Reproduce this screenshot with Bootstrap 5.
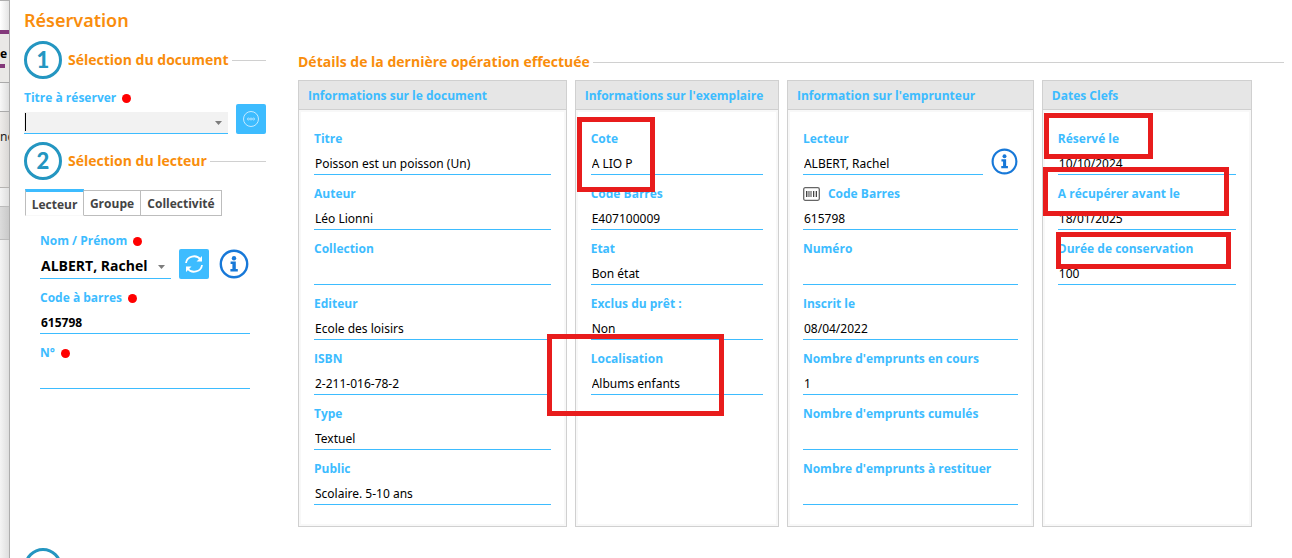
<!DOCTYPE html>
<html lang="fr">
<head>
<meta charset="utf-8">
<meta name="viewport" content="width=device-width, initial-scale=1">
<title>Réservation</title>
<link href="https://cdn.jsdelivr.net/npm/bootstrap@5.3.0/dist/css/bootstrap.min.css" rel="stylesheet">
<style>
  :root { --sky: #3dbcff; --amber: #f98d0c; --teal: #2496c1; }
  body { font-family: "Noto Sans", "Open Sans", sans-serif; font-size: 12px; color: #000; background: #fff; }
  .app { overflow: hidden; }
  .page { min-width: 0; padding: 8px 8px 0 14px; }

  /* window behind the dialog */
  .behind { width: 10px; border-right: 1px solid #adadad; overflow: hidden; font-size: 12px;
            background: linear-gradient(to right, #f4f4f4, #dedede); }
  .behind > div { flex: none; white-space: nowrap; }
  .strip-top { height: 30px; border-top: 1px solid #b0b0b0; background: linear-gradient(to right, #fff, #e4e4e4); }
  .strip-tab { height: 53px; border-top: 4px solid #83397b; border-bottom: 1px solid #aaa; background: #e9e8e6; line-height: 14px; padding-top: 13px; font-weight: 700; }
  .strip-mark { width: 5px; height: 4px; margin-top: 3px; background: #83397b; }
  .strip-band { height: 29px; border-bottom: 1px solid #aaa; background: linear-gradient(to right, #f8f8f8, #dedede); }
  .strip-text { height: 76px; border-bottom: 1px solid #b5b3b1; background: linear-gradient(to right, #eeecea, #d9d7d5); padding-top: 16px; color: #222; }
  .strip-gap { height: 18px; }
  .strip-bar { height: 34px; border: solid #bbb; border-width: 1px 0; background: linear-gradient(to right, #dcdcdc, #c9c9c9); }

  .page-title { font-size: 18px; line-height: 24px; font-weight: 600; color: var(--amber); }
  .legend-text { font-family: "Open Sans", sans-serif; font-size: 14px; line-height: 20px; font-weight: 700; color: var(--amber); white-space: nowrap; }
  .rule { height: 1px; margin-left: 3px; background: #d0d0d0; }
  .side { width: 242px; flex: none; padding-top: 9px; }
  .step { width: 38px; height: 38px; flex: none; border: 3px solid var(--teal); border-radius: 50%;
          color: var(--teal); font: 900 22px/32px "Lato", sans-serif; text-align: center; }
  .step + .legend-text { margin-left: 6px; }
  .title-row { margin-top: 5px; }
  .next-step { margin-top: 159px; }

  .field { position: relative; margin-bottom: 8px; }
  .field-name { display: flex; align-items: center; height: 20px; padding-top: 2px; font-family: "Open Sans", sans-serif; font-size: 12px; font-weight: 700; color: var(--sky); white-space: nowrap; }
  .line-input { display: block; width: 100%; height: 27px; padding: 4px 1px 0; border: 0; border-bottom: 1px solid var(--sky);
                border-radius: 0; background: none; color: #000; font-size: 12px; line-height: 22px; outline: 0; appearance: none; }
  .dot { width: 9px; height: 9px; margin-left: 6px; border-radius: 50%; background: #f00; }
  .combo { position: relative; }
  .combo svg { position: absolute; right: 6px; top: 50%; pointer-events: none; }
  .combo .combo-grey { height: 22px; background: #f2f2f2; }
  .combo-grey ~ svg { top: 9px; }
  .caret { position: absolute; left: 1px; top: 1px; width: 1px; height: 18px; background: #000; }
  .strong-value { font-weight: 700; }
  .name-value { font-family: "Open Sans", sans-serif; font-size: 14px; font-weight: 700; height: 29px; }
  .tool { width: 30px; height: 30px; flex: none; border-radius: 2px; background: var(--sky); }
  .info { flex: none; color: #1778d8; line-height: 0; }

  .tabs { margin: 9px 0 0 1px; }
  .tab { height: 26px; padding: 2px 0 0; border: 1px solid #bdbdbd; background: #fff; color: #444; font-family: "Open Sans", sans-serif; font-size: 12px; font-weight: 700; line-height: 20px; }
  .tab-active { width: 59px; height: 27px; border-top: 3px solid var(--sky); border-bottom-color: #f8f8f8; }
  .tab-mid { width: 57px; border-left: 0; }
  .tab-last { width: 81px; border-left: 0; }
  .tab-body { padding: 14px 16px 0; }
  .name-row { width: 209px; }
  .name-row .info { margin-left: 10px; }

  .details { min-width: 0; margin: 20px 0 0 32px; }
  .panels { margin: 8px 32px 0 0; }
  .panel { min-width: 0; border: 1px solid #d0d0d0; }
  .panel-head { height: 29px; padding-left: 9px; border-bottom: 1px solid #d0d0d0; background: #e6e6e6; color: var(--sky);
                font-family: "Open Sans", sans-serif; font-size: 12px; line-height: 29px; font-weight: 700; white-space: nowrap; }
  .panel-body { height: 416px; padding: 16px 13px 0; border: 2px solid #f8f8f8; }
  .panel-doc { flex: 269 1 0; }
  .panel-copy { flex: 204 1 0; }
  .panel-user { flex: 247 1 0; }
  .panel-dates { flex: 210 1 0; }

  /* red frames laid over the fields they point out */
  .frame { position: absolute; z-index: 2; border: 5px solid #e81c1c; pointer-events: none; }
  .frame-cote { left: -14px; top: -11px; width: 78px; height: 75px; }
  .frame-place { left: -44px; top: -14px; width: 177px; height: 82px; }
  .frame-booked { left: -14px; top: -15px; width: 109px; height: 46px; }
  .frame-pickup { left: -15px; top: -16px; width: 186px; height: 49px; }
  .frame-keep { left: -2px; top: -6px; width: 175px; height: 37px; }
</style>
</head>
<body>
<svg class="d-none" xmlns="http://www.w3.org/2000/svg">
  <symbol id="i-info" viewBox="0 0 30 30">
    <circle cx="15" cy="15" r="13.2" fill="none" stroke="currentColor" stroke-width="2.4"/>
    <circle cx="15" cy="9.2" r="2.2" fill="currentColor"/>
    <path d="M11.6 12.6h5.2v7.4h2v2.4h-7.4V20h2v-5h-1.8z" fill="currentColor"/>
  </symbol>
  <symbol id="i-arrow" viewBox="0 0 7 4"><path d="M0 0h7L3.500 4z" fill="#7d7d7d"/></symbol>
</svg>

<div class="app d-flex vh-100">
  <div class="behind d-flex flex-column flex-shrink-0" aria-hidden="true">
    <div class="strip-top"></div>
    <div class="strip-tab">e<div class="strip-mark"></div></div>
    <div class="strip-band"></div>
    <div class="strip-text">nc</div>
    <div class="strip-gap"></div>
    <div class="strip-bar"></div>
  </div>

  <main class="page flex-grow-1">
    <h1 class="page-title mb-0">Réservation</h1>
    <div class="d-flex align-items-start">
      <section class="side">
        <div class="d-flex align-items-center">
          <span class="step">1</span>
          <h2 class="legend-text mb-0">Sélection du document</h2>
          <div class="rule flex-grow-1"></div>
        </div>
        <div class="d-flex align-items-end mt-2">
          <div class="flex-grow-1 me-2">
            <label class="field-name" for="titre">Titre à réserver <span class="dot"></span></label>
            <div class="combo title-row">
              <select id="titre" class="line-input combo-grey"><option></option></select>
              <span class="caret"></span>
              <svg width="7" height="4"><use href="#i-arrow"/></svg>
            </div>
          </div>
          <button class="tool btn p-0 border-0 d-flex align-items-center justify-content-center" type="button" aria-label="Parcourir">
            <svg width="18" height="18" viewBox="0 0 18 18" fill="none" stroke="#c4eaff"><circle cx="9" cy="9" r="7.500"/><g stroke-width=".8"><circle cx="6.400" cy="9" r="1"/><circle cx="9" cy="9" r="1"/><circle cx="11.600" cy="9" r="1"/></g></svg>
          </button>
        </div>
        <div class="d-flex align-items-center mt-2">
          <span class="step">2</span>
          <h2 class="legend-text mb-0">Sélection du lecteur</h2>
          <div class="rule flex-grow-1"></div>
        </div>
        <div class="tabs d-flex align-items-end" role="tablist">
          <button class="tab tab-active" type="button" role="tab" aria-selected="true">Lecteur</button>
          <button class="tab tab-mid" type="button" role="tab">Groupe</button>
          <button class="tab tab-last" type="button" role="tab">Collectivité</button>
        </div>
        <div class="tab-body">
          <div class="d-flex align-items-end field name-row">
            <div class="flex-grow-1">
              <label class="field-name" for="nom">Nom / Prénom <span class="dot"></span></label>
              <div class="combo">
                <select id="nom" class="line-input name-value"><option>ALBERT, Rachel</option></select>
                <svg width="7" height="4"><use href="#i-arrow"/></svg>
              </div>
            </div>
            <button class="tool btn p-0 border-0 ms-2 d-flex align-items-center justify-content-center" type="button" aria-label="Actualiser">
              <svg width="20" height="20" viewBox="0 0 20 20" fill="none" stroke="#fff" stroke-width="1.800"><path d="M2 9a8 7.500 0 0 1 14.500-3.500M18 11a8 7.500 0 0 1-14.500 3.500"/><path d="M18 2v5.500h-5.500zM2 18v-5.500h5.500z" fill="#fff" stroke="none"/></svg>
            </button>
            <a class="info" href="#" aria-label="Informations sur le lecteur"><svg width="30" height="30"><use href="#i-info"/></svg></a>
          </div>
          <div class="field">
            <label class="field-name" for="code">Code à barres <span class="dot"></span></label>
            <input id="code" class="line-input strong-value" value="615798">
          </div>
          <div class="field">
            <label class="field-name" for="num">N° <span class="dot"></span></label>
            <input id="num" class="line-input">
          </div>
        </div>
        <div class="next-step"><span class="step d-block"></span></div>
      </section>

      <section class="details flex-grow-1">
        <div class="d-flex align-items-center">
          <h2 class="legend-text mb-0">Détails de la dernière opération effectuée</h2>
          <div class="rule flex-grow-1"></div>
        </div>
        <div class="panels d-flex gap-2">
          <article class="panel panel-doc">
            <h3 class="panel-head mb-0">Informations sur le document</h3>
            <div class="panel-body">
              <div class="field"><label class="field-name" for="d1">Titre</label><input id="d1" class="line-input" value="Poisson est un poisson (Un)"></div>
              <div class="field"><label class="field-name" for="d2">Auteur</label><input id="d2" class="line-input" value="Léo Lionni"></div>
              <div class="field"><label class="field-name" for="d3">Collection</label><input id="d3" class="line-input"></div>
              <div class="field"><label class="field-name" for="d4">Editeur</label><input id="d4" class="line-input" value="Ecole des loisirs"></div>
              <div class="field"><label class="field-name" for="d5">ISBN</label><input id="d5" class="line-input" value="2-211-016-78-2"></div>
              <div class="field"><label class="field-name" for="d6">Type</label><input id="d6" class="line-input" value="Textuel"></div>
              <div class="field"><label class="field-name" for="d7">Public</label><input id="d7" class="line-input" value="Scolaire. 5-10 ans"></div>
            </div>
          </article>
          <article class="panel panel-copy">
            <h3 class="panel-head mb-0">Informations sur l'exemplaire</h3>
            <div class="panel-body">
              <div class="field"><label class="field-name" for="e1">Cote</label><input id="e1" class="line-input" value="A LIO P"><span class="frame frame-cote"></span></div>
              <div class="field"><label class="field-name" for="e2">Code Barres</label><input id="e2" class="line-input" value="E407100009"></div>
              <div class="field"><label class="field-name" for="e3">Etat</label><input id="e3" class="line-input" value="Bon état"></div>
              <div class="field"><label class="field-name" for="e4">Exclus du prêt :</label><input id="e4" class="line-input" value="Non"></div>
              <div class="field"><label class="field-name" for="e5">Localisation</label><input id="e5" class="line-input" value="Albums enfants"><span class="frame frame-place"></span></div>
            </div>
          </article>
          <article class="panel panel-user">
            <h3 class="panel-head mb-0">Information sur l'emprunteur</h3>
            <div class="panel-body">
              <div class="field d-flex align-items-end">
                <div class="flex-grow-1"><label class="field-name" for="u1">Lecteur</label><input id="u1" class="line-input" value="ALBERT, Rachel"></div>
                <a class="info ms-2" href="#" aria-label="Fiche de l'emprunteur"><svg width="27" height="27"><use href="#i-info"/></svg></a>
              </div>
              <div class="field"><label class="field-name" for="u2"><svg class="me-2" width="17" height="14" viewBox="0 0 17 14"><rect x=".7" y=".7" width="15.600" height="12.600" rx="1.500" fill="#fff" stroke="#666" stroke-width="1.300"/><path d="M3.500 4v6M6 4v6M8 4v6M10.500 4v6M13.500 4v6" stroke="#444"/><path d="M4.800 4v6M12 4v6" stroke="#777" stroke-width=".8"/></svg>Code Barres</label><input id="u2" class="line-input" value="615798"></div>
              <div class="field"><label class="field-name" for="u3">Numéro</label><input id="u3" class="line-input"></div>
              <div class="field"><label class="field-name" for="u4">Inscrit le</label><input id="u4" class="line-input" value="08/04/2022"></div>
              <div class="field"><label class="field-name" for="u5">Nombre d'emprunts en cours</label><input id="u5" class="line-input" value="1"></div>
              <div class="field"><label class="field-name" for="u6">Nombre d'emprunts cumulés</label><input id="u6" class="line-input"></div>
              <div class="field"><label class="field-name" for="u7">Nombre d'emprunts à restituer</label><input id="u7" class="line-input"></div>
            </div>
          </article>
          <article class="panel panel-dates">
            <h3 class="panel-head mb-0">Dates Clefs</h3>
            <div class="panel-body">
              <div class="field"><label class="field-name" for="k1">Réservé le</label><input id="k1" class="line-input" value="10/10/2024"><span class="frame frame-booked"></span></div>
              <div class="field"><label class="field-name" for="k2">A récupérer avant le</label><input id="k2" class="line-input" value="18/01/2025"><span class="frame frame-pickup"></span></div>
              <div class="field"><label class="field-name" for="k3">Durée de conservation</label><input id="k3" class="line-input" value="100"><span class="frame frame-keep"></span></div>
            </div>
          </article>
        </div>
      </section>
    </div>
  </main>
</div>
<script src="https://cdn.jsdelivr.net/npm/bootstrap@5.3.0/dist/js/bootstrap.bundle.min.js"></script>
</body>
</html>
